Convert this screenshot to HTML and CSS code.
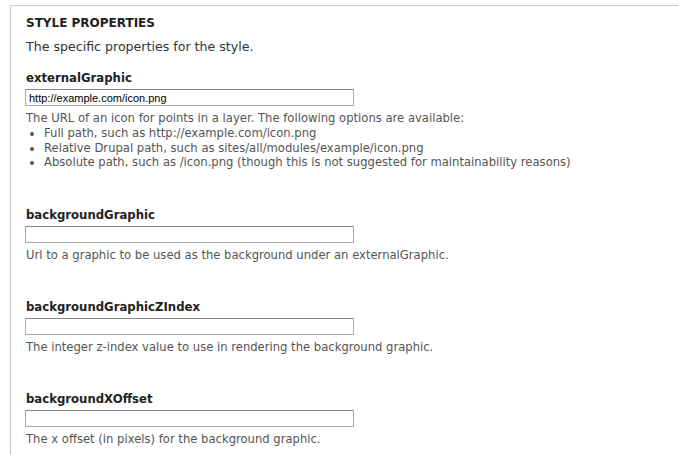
FILE: index.html
```html
<!DOCTYPE html>
<html>
<head>
<meta charset="utf-8">
<link rel="stylesheet" href="styles.css">
</head>
<body>
<div class="panel">
  <h2 class="panel-title">STYLE PROPERTIES</h2>
  <p class="panel-intro">The specific properties for the style.</p>

  <div class="field">
    <label class="field-label">externalGraphic</label>
    <input class="field-input" type="text" value="http://example.com/icon.png">
    <div class="field-desc">
      The URL of an icon for points in a layer. The following options are available:
      <ul class="field-list">
        <li>Full path, such as http://example.com/icon.png</li>
        <li>Relative Drupal path, such as sites/all/modules/example/icon.png</li>
        <li>Absolute path, such as /icon.png (though this is not suggested for maintainability reasons)</li>
      </ul>
    </div>
  </div>

  <div class="field">
    <label class="field-label">backgroundGraphic</label>
    <input class="field-input" type="text" value="">
    <div class="field-desc">Url to a graphic to be used as the background under an externalGraphic.</div>
  </div>

  <div class="field">
    <label class="field-label">backgroundGraphicZIndex</label>
    <input class="field-input" type="text" value="">
    <div class="field-desc">The integer z-index value to use in rendering the background graphic.</div>
  </div>

  <div class="field">
    <label class="field-label">backgroundXOffset</label>
    <input class="field-input" type="text" value="">
    <div class="field-desc">The x offset (in pixels) for the background graphic.</div>
  </div>
</div>
</body>
</html>
```
FILE: styles.css
```css
html, body {
  margin: 0;
  padding: 0;
  background: #fff;
}
body {
  font-family: "DejaVu Sans", Verdana, sans-serif;
  color: #333;
  overflow: hidden;
}
.panel {
  margin: 5px 0 0 10px;
  border-top: 1px solid #ccc;
  border-left: 1px solid #ccc;
  padding: 9px 0 0 15px;
  min-height: 460px;
}
.panel-title {
  margin: 0;
  font-size: 12px;
  font-weight: bold;
  line-height: 16px;
  color: #222;
}
.panel-intro {
  margin: 8px 0 0;
  font-size: 12.6px;
  line-height: 16px;
  color: #333;
}
.field {
  display: flex;
  flex-direction: column;
  align-items: flex-start;
  margin-bottom: 37px;
}
.panel-intro + .field {
  margin-top: 15px;
}
.field-label {
  font-size: 11.7px;
  font-weight: bold;
  line-height: 16px;
  color: #222;
}
.field-input {
  box-sizing: border-box;
  margin: 3px 0 0 -1px;
  width: 329px;
  height: 17px;
  padding: 0 3px;
  border: 1px solid #aaa;
  border-top-color: #888;
  font-family: "Liberation Sans", Arial, sans-serif;
  font-size: 11px;
  color: #000;
  outline: none;
}
.field-desc {
  margin-top: 5px;
  font-size: 11.6px;
  line-height: 14px;
  color: #555;
}
.field-list {
  margin: 1px 0 0;
  padding: 0 0 0 18px;
  list-style: disc;
}
.field-list li {
  line-height: 14.5px;
}
```
